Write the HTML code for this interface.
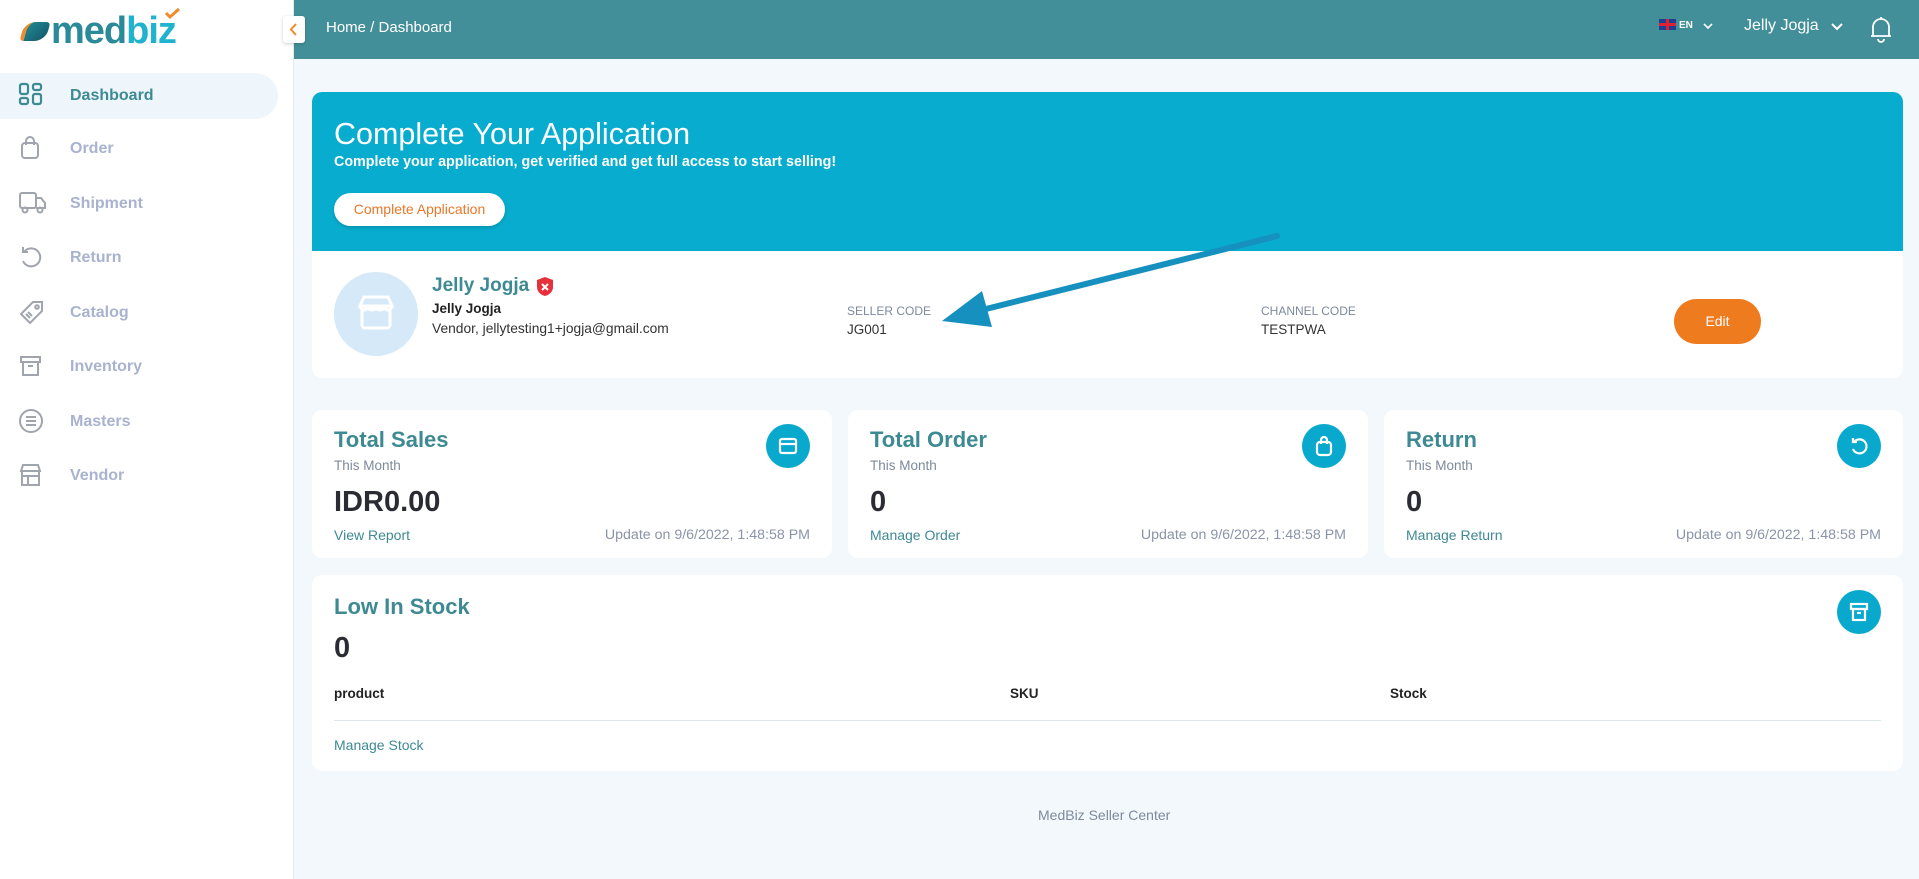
<!DOCTYPE html>
<html><head><meta charset="utf-8"><style>
*{box-sizing:border-box;margin:0;padding:0}
body{width:1919px;height:879px;overflow:hidden;background:#f3f8fc;font-family:"Liberation Sans",sans-serif;position:relative}
.abs{position:absolute}
#side{left:0;top:0;width:294px;height:879px;background:#fff;border-right:1px solid #e6ebf0}
.nav{position:absolute;left:0;width:278px;height:46px;display:flex;align-items:center}
.nav span{position:absolute;left:70px;font-size:16px;font-weight:bold;color:#a9b3cf}
.nav svg{position:absolute;left:18px;top:9px}
#hdr{left:294px;top:0;width:1625px;height:59px;background:#438f99}
.card{background:#fff;border-radius:10px;position:absolute}
.t{position:absolute;white-space:nowrap}
.ic{position:absolute;width:44px;height:44px;border-radius:50%;background:#08a9cd}
.ic svg{position:absolute;left:11px;top:11px}
</style></head><body>
<div id="side" class="abs">
  <div class="t" style="left:22px;top:10px;font-size:38px;font-weight:bold;color:#3a9aa6;letter-spacing:-1px">
    <span style="display:inline-block;width:26px;height:19px;border-radius:11px 4px 11px 4px;background:linear-gradient(135deg,#1f8a94,#16566a);vertical-align:2px;margin-right:3px;transform:skewX(-15deg);border-left:4px solid #f08a2a"></span><span style="color:#2b8a99">med</span><span style="color:#20b3cf">biz</span>
  </div>
  <svg class="abs" style="left:163px;top:8px" width="20" height="13"><path d="M3 5l4 4 9-8" stroke="#f08a2a" stroke-width="3" fill="none"/></svg>
  <div class="nav" style="top:73px;background:#eef6fc;border-radius:0 24px 24px 0"><svg width="26" height="28" fill="none" stroke="#3d8a93" stroke-width="2.2"><rect x="2" y="2" width="8" height="10" rx="2"/><rect x="15" y="2" width="8" height="6" rx="2"/><rect x="2" y="16" width="8" height="6" rx="2"/><rect x="15" y="12" width="8" height="10" rx="2"/></svg><span style="color:#3d8a93">Dashboard</span></div>
  <div class="nav" style="top:126px"><svg width="26" height="28" fill="none" stroke="#a0a4ad" stroke-width="2"><rect x="4" y="8" width="16" height="15" rx="3"/><path d="M8 10V6a4 4 0 0 1 8 0v4"/></svg><span>Order</span></div>
  <div class="nav" style="top:181px"><svg width="30" height="28" fill="none" stroke="#a0a4ad" stroke-width="2"><rect x="2" y="3" width="16" height="15" rx="2"/><path d="M18 8h5l4 5v5h-9"/><circle cx="7" cy="20" r="2.5"/><circle cx="22" cy="20" r="2.5"/></svg><span>Shipment</span></div>
  <div class="nav" style="top:235px"><svg width="26" height="28" fill="none" stroke="#a0a4ad" stroke-width="2"><path d="M6 8a9 9 0 1 1-1 9"/><path d="M5 3v5h5"/></svg><span>Return</span></div>
  <div class="nav" style="top:290px"><svg width="28" height="28" fill="none" stroke="#a0a4ad" stroke-width="2"><path d="M15 3h9v9L12 24 3 15z"/><circle cx="19" cy="8" r="1.8"/><path d="M8 15l4 4M10 13l4 4"/></svg><span>Catalog</span></div>
  <div class="nav" style="top:344px"><svg width="26" height="28" fill="none" stroke="#a0a4ad" stroke-width="2"><rect x="3" y="4" width="19" height="5"/><rect x="5" y="9" width="15" height="13"/><path d="M10 13h5"/></svg><span>Inventory</span></div>
  <div class="nav" style="top:399px"><svg width="28" height="28" fill="none" stroke="#a0a4ad" stroke-width="2"><circle cx="13" cy="13" r="11"/><path d="M8 9h10M8 13h10M8 17h10"/></svg><span>Masters</span></div>
  <div class="nav" style="top:453px"><svg width="26" height="28" fill="none" stroke="#a0a4ad" stroke-width="2"><path d="M3 9l2-6h15l2 6zM4 9v14h17V9"/><path d="M4 14h17M10 14v9"/></svg><span>Vendor</span></div>
</div>
<div id="hdr" class="abs">
  <div class="t" style="left:32px;top:19px;font-size:15px;color:#fff">Home / Dashboard</div>
  <div class="t" style="left:1365px;top:19px;width:17px;height:11px;background:#1f3f8f;overflow:hidden"><div style="position:absolute;left:7px;top:0;width:3px;height:11px;background:#d23"></div><div style="position:absolute;left:0;top:4px;width:17px;height:3px;background:#d23"></div></div>
  <div class="t" style="left:1385px;top:20px;font-size:10px;font-weight:bold;color:#fff">EN</div>
  <svg class="abs" style="left:1408px;top:22px" width="12" height="8"><path d="M2 2l4 4 4-4" stroke="#fff" stroke-width="1.6" fill="none"/></svg>
  <div class="t" style="left:1450px;top:17px;font-size:16px;color:#fff">Jelly Jogja</div>
  <svg class="abs" style="left:1536px;top:22px" width="14" height="9"><path d="M2 2l5 5 5-5" stroke="#fff" stroke-width="2" fill="none"/></svg>
  <svg class="abs" style="left:1575px;top:14px" width="24" height="30" fill="none" stroke="#fff" stroke-width="1.8"><path d="M4 22V13a8 8 0 0 1 16 0v9h2H2zM12 3v2M9 25a3 3 0 0 0 6 0"/></svg>
</div>
<div class="abs" style="left:283px;top:16px;width:22px;height:27px;background:#fff;border-radius:3px;box-shadow:0 1px 3px rgba(0,0,0,.2)"><svg width="22" height="27"><path d="M13 8l-5 5.5 5 5.5" stroke="#f08a2a" stroke-width="2" fill="none"/></svg></div>

<div class="card" style="left:312px;top:92px;width:1591px;height:286px;overflow:hidden">
  <div class="abs" style="left:0;top:0;width:1591px;height:159px;background:#07acce"></div>
  <div class="t" style="left:22px;top:25px;font-size:30.5px;color:#fff">Complete Your Application</div>
  <div class="t" style="left:22px;top:62px;font-size:14.3px;font-weight:bold;color:#fff">Complete your application, get verified and get full access to start selling!</div>
  <div class="abs" style="left:22px;top:101px;width:171px;height:33px;border-radius:17px;background:#fff;color:#e8782a;font-size:14px;text-align:center;line-height:33px;box-shadow:0 2px 3px rgba(0,0,0,.15)">Complete Application</div>
  <div class="abs" style="left:22px;top:180px;width:84px;height:84px;border-radius:50%;background:#d6e9f8"></div>
  <svg class="abs" style="left:44px;top:201px" width="40" height="40" fill="none" stroke="#fff" stroke-width="3"><path d="M8 4h24l4 9H4z"/><path d="M4 13a4 4 0 0 0 8 0 4 4 0 0 0 8 0 4 4 0 0 0 8 0 4 4 0 0 0 8 0"/><rect x="6" y="16" width="28" height="19" rx="3"/></svg>
  <div class="t" style="left:120px;top:183px;font-size:19px;font-weight:bold;color:#3d8a93">Jelly Jogja</div>
  <svg class="abs" style="left:224px;top:184px" width="18" height="21"><path d="M9 1l8 3v7c0 5-4 8-8 9-4-1-8-4-8-9V4z" fill="#e8303a"/><path d="M6 8l6 6M12 8l-6 6" stroke="#fff" stroke-width="2"/></svg>
  <div class="t" style="left:120px;top:209px;font-size:13.5px;font-weight:bold;color:#222">Jelly Jogja</div>
  <div class="t" style="left:120px;top:229px;font-size:13.8px;color:#333">Vendor, jellytesting1+jogja@gmail.com</div>
  <div class="t" style="left:535px;top:212px;font-size:12px;color:#7d8a9c">SELLER CODE</div>
  <div class="t" style="left:535px;top:230px;font-size:13.5px;color:#333">JG001</div>
  <div class="t" style="left:949px;top:212px;font-size:12px;color:#7d8a9c">CHANNEL CODE</div>
  <div class="t" style="left:949px;top:230px;font-size:13.5px;color:#333">TESTPWA</div>
  <div class="abs" style="left:1362px;top:207px;width:87px;height:45px;border-radius:23px;background:#ef7b1f;color:#fff;font-size:14px;text-align:center;line-height:45px">Edit</div>
</div>
<svg class="abs" style="left:930px;top:225px" width="360" height="110"><path d="M347 11L40 88" stroke="#1690bf" stroke-width="6" stroke-linecap="round"/><path d="M12 96l40-30 10 36z" fill="#1690bf"/></svg>

<div class="card" style="left:312px;top:410px;width:520px;height:148px">
  <div class="t" style="left:22px;top:17px;font-size:22px;font-weight:bold;color:#3d8a93">Total Sales</div>
  <div class="t" style="left:22px;top:48px;font-size:13.5px;color:#7d8a9c">This Month</div>
  <div class="t" style="left:22px;top:76px;font-size:29px;font-weight:bold;color:#2b2b33">IDR0.00</div>
  <div class="t" style="left:22px;top:117px;font-size:14px;color:#3d8a93">View Report</div>
  <div class="t" style="right:22px;top:117px;font-size:14.2px;color:#8a94a8">Update on 9/6/2022, 1:48:58 PM</div>
  <div class="ic" style="left:454px;top:14px"><svg width="22" height="22" fill="none" stroke="#fff" stroke-width="2.2"><rect x="3" y="4" width="16" height="14" rx="2"/><path d="M3 9h16"/></svg></div>
</div>
<div class="card" style="left:848px;top:410px;width:520px;height:148px">
  <div class="t" style="left:22px;top:17px;font-size:22px;font-weight:bold;color:#3d8a93">Total Order</div>
  <div class="t" style="left:22px;top:48px;font-size:13.5px;color:#7d8a9c">This Month</div>
  <div class="t" style="left:22px;top:76px;font-size:29px;font-weight:bold;color:#2b2b33">0</div>
  <div class="t" style="left:22px;top:117px;font-size:14px;color:#3d8a93">Manage Order</div>
  <div class="t" style="right:22px;top:117px;font-size:14.2px;color:#8a94a8">Update on 9/6/2022, 1:48:58 PM</div>
  <div class="ic" style="left:454px;top:14px"><svg width="22" height="22" fill="none" stroke="#fff" stroke-width="2.2"><rect x="4" y="7" width="14" height="13" rx="3"/><path d="M8 9V5a3 3 0 0 1 6 0v4"/></svg></div>
</div>
<div class="card" style="left:1384px;top:410px;width:519px;height:148px">
  <div class="t" style="left:22px;top:17px;font-size:22px;font-weight:bold;color:#3d8a93">Return</div>
  <div class="t" style="left:22px;top:48px;font-size:13.5px;color:#7d8a9c">This Month</div>
  <div class="t" style="left:22px;top:76px;font-size:29px;font-weight:bold;color:#2b2b33">0</div>
  <div class="t" style="left:22px;top:117px;font-size:14px;color:#3d8a93">Manage Return</div>
  <div class="t" style="right:22px;top:117px;font-size:14.2px;color:#8a94a8">Update on 9/6/2022, 1:48:58 PM</div>
  <div class="ic" style="left:453px;top:14px"><svg width="22" height="22" fill="none" stroke="#fff" stroke-width="2.2"><path d="M6 7a7 7 0 1 1-1 7"/><path d="M5 3v4h4"/></svg></div>
</div>
<div class="card" style="left:312px;top:575px;width:1591px;height:196px">
  <div class="t" style="left:22px;top:19px;font-size:22px;font-weight:bold;color:#3d8a93">Low In Stock</div>
  <div class="t" style="left:22px;top:57px;font-size:29px;font-weight:bold;color:#2b2b33">0</div>
  <div class="t" style="left:22px;top:111px;font-size:13.5px;font-weight:bold;color:#222">product</div>
  <div class="t" style="left:698px;top:111px;font-size:13.5px;font-weight:bold;color:#222">SKU</div>
  <div class="t" style="left:1078px;top:111px;font-size:13.5px;font-weight:bold;color:#222">Stock</div>
  <div class="abs" style="left:22px;top:145px;width:1547px;height:1px;background:#dce8ee"></div>
  <div class="t" style="left:22px;top:162px;font-size:14px;color:#3d8a93">Manage Stock</div>
  <div class="ic" style="left:1525px;top:15px"><svg width="22" height="22" fill="none" stroke="#fff" stroke-width="2.2"><rect x="3" y="3" width="16" height="5"/><rect x="5" y="8" width="12" height="11"/><path d="M9 12h4"/></svg></div>
</div>
<div class="t" style="left:1038px;top:807px;font-size:14px;color:#7d8a9c">MedBiz Seller Center</div>
</body></html>
